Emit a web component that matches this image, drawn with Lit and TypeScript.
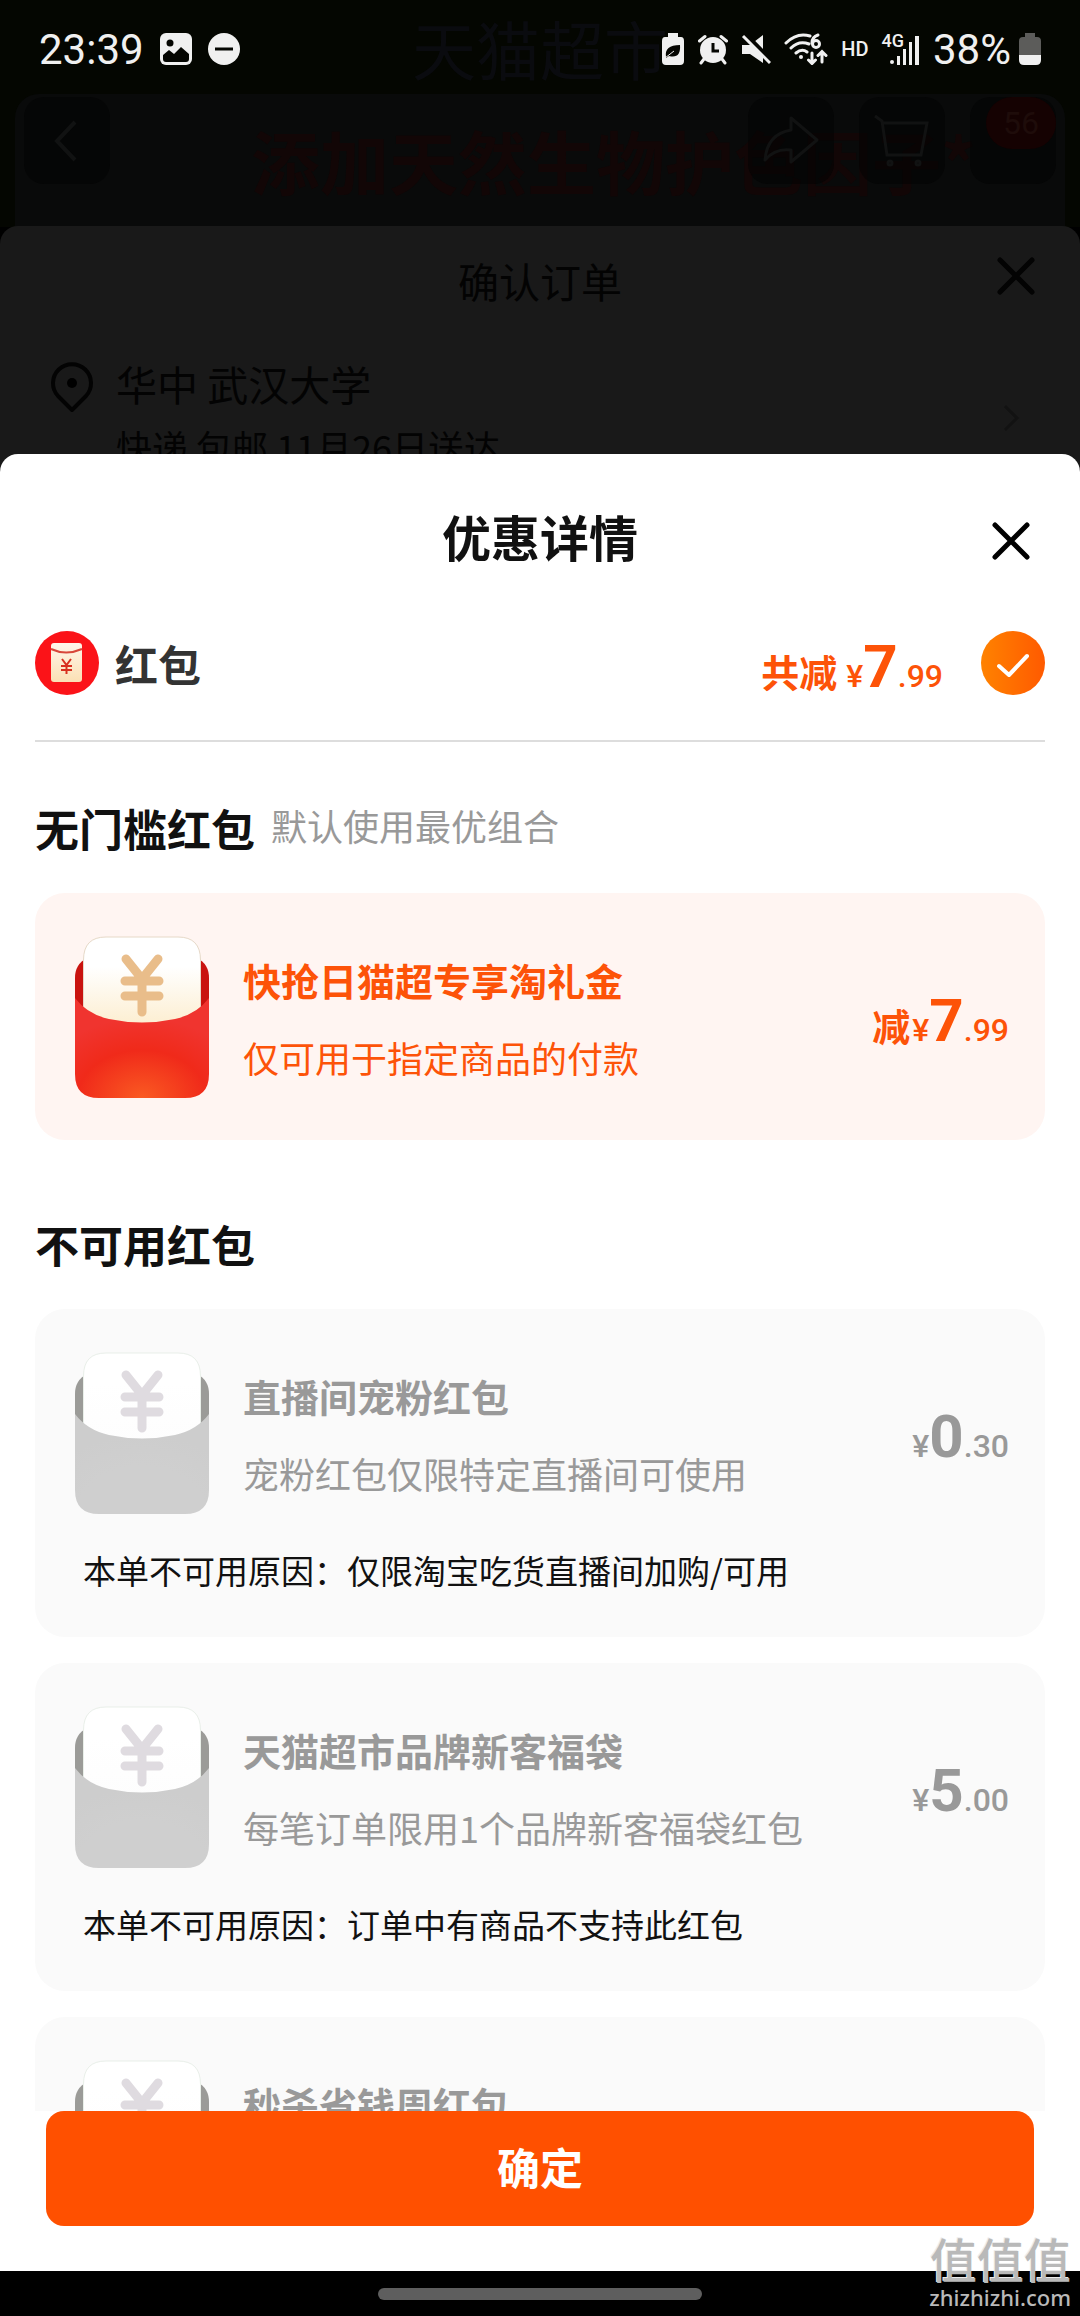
import { LitElement, html, css, svg, nothing } from "lit";
import { customElement, property } from "lit/decorators.js";

interface Coupon {
  title: string;
  desc: string;
  whole: string;
  cents: string;
  reason?: string;
}

const AVAILABLE: Coupon[] = [
  { title: "快抢日猫超专享淘礼金", desc: "仅可用于指定商品的付款", whole: "7", cents: "99" },
];

const UNAVAILABLE: Coupon[] = [
  {
    title: "直播间宠粉红包",
    desc: "宠粉红包仅限特定直播间可使用",
    whole: "0",
    cents: "30",
    reason: "本单不可用原因：仅限淘宝吃货直播间加购/可用",
  },
  {
    title: "天猫超市品牌新客福袋",
    desc: "每笔订单限用1个品牌新客福袋红包",
    whole: "5",
    cents: "00",
    reason: "本单不可用原因：订单中有商品不支持此红包",
  },
  {
    title: "秒杀省钱周红包",
    desc: "",
    whole: "",
    cents: "",
  },
];

@customElement("price-tag")
export class PriceTag extends LitElement {
  @property() prefix = "";
  @property() whole = "0";
  @property() cents = "00";

  static styles = css`
    :host {
      display: flex;
      align-items: baseline;
      padding-top: 8px;
      font-family: Roboto, "Noto Sans CJK SC", sans-serif;
      font-size: 32px;
      font-weight: 500;
      line-height: 32px;
      white-space: nowrap;
    }
    .prefix {
      font-family: "Noto Sans CJK SC", sans-serif;
      font-size: 38px;
      font-weight: 700;
      margin-right: var(--prefix-gap, 2px);
    }
    .whole {
      font-size: 60px;
      line-height: 52px;
      font-weight: 700;
    }
  `;

  render() {
    return html`${this.prefix ? html`<span class="prefix">${this.prefix}</span>` : nothing}<span>¥</span
      ><span class="whole">${this.whole}</span><span>.${this.cents}</span>`;
  }
}

@customElement("red-packet")
export class RedPacket extends LitElement {
  @property({ type: Boolean }) muted = false;

  static styles = css`
    :host {
      display: block;
      flex: none;
    }
    svg {
      display: block;
      width: 134px;
      height: 162px;
    }
  `;

  render() {
    const c = this.muted
      ? { back: "#9b9b98", edge: "#cdcdcd", mid: "#cfcfcf", low: "#cfcfcf", top: "#ffffff", foot: "#fdfdfd", line: "#e9efe9", yen: "#dfdbe0" }
      : { back: "#c9130f", edge: "#f0342f", mid: "#f02a1a", low: "#fa5a22", top: "#ffffff", foot: "#fcebc8", line: "#e6d9c8", yen: "#e9bd8a" };
    return html`<svg viewBox="0 0 134 162" aria-hidden="true">
      <defs>
        <linearGradient id="paper" x1="0" y1="0" x2="0" y2="1">
          <stop offset="0.3" stop-color=${c.top} />
          <stop offset="1" stop-color=${c.foot} />
        </linearGradient>
        <radialGradient id="body" cx="0.5" cy="1" r="0.8">
          <stop offset="0" stop-color=${c.low} />
          <stop offset="0.6" stop-color=${c.mid} />
          <stop offset="1" stop-color=${c.edge} />
        </radialGradient>
      </defs>
      <path d="M0 42Q0 28 12 22H122Q134 28 134 42V100H0Z" fill=${c.back} />
      <path d="M8.500 100V24Q8.500 1 31 1H103Q125.500 1 125.500 24V100Z" fill="url(#paper)" stroke=${c.line} />
      <path d="M0 62Q12 78 34 83Q67 90 100 83Q122 78 134 62V138Q134 162 110 162H24Q0 162 0 138Z" fill="url(#body)" />
      <path d="M51 23L67 43L83 23M50 45H84M50 60H84M67 43V76" fill="none" stroke=${c.yen} stroke-width="9" stroke-linecap="round" stroke-linejoin="round" />
    </svg>`;
  }
}

@customElement("coupon-card")
export class CouponCard extends LitElement {
  @property({ attribute: false }) coupon!: Coupon;
  @property({ type: Boolean, reflect: true }) disabled = false;

  static styles = css`
    :host {
      display: block;
      padding: 43px 36px 42px 40px;
      border-radius: 30px;
      background: #fff5f2;
      color: #fd5308;
    }
    :host([disabled]) {
      background: #fafafa;
      color: #999;
    }
    .main {
      display: flex;
      align-items: center;
      gap: 34px;
    }
    .info {
      flex: 1;
      display: flex;
      flex-direction: column;
      gap: 28px;
      min-width: 0;
      white-space: nowrap;
    }
    h3,
    p {
      margin: 0;
    }
    h3 {
      font-size: 38px;
      line-height: 52px;
      font-weight: 700;
    }
    .desc {
      min-height: 46px;
      font-size: 36px;
      line-height: 46px;
    }
    .reason {
      margin: 31px 0 0 8px;
      font-size: 33px;
      line-height: 50px;
      color: #111;
    }
  `;

  render() {
    const c = this.coupon;
    return html`
      <div class="main">
        <red-packet ?muted=${this.disabled}></red-packet>
        <div class="info">
          <h3>${c.title}</h3>
          <p class="desc">${c.desc}</p>
        </div>
        ${c.whole
          ? html`<price-tag prefix=${this.disabled ? "" : "减"} whole=${c.whole} cents=${c.cents}></price-tag>`
          : nothing}
      </div>
      ${c.reason ? html`<p class="reason">${c.reason}</p>` : nothing}
    `;
  }
}

@customElement("status-bar")
export class StatusBar extends LitElement {
  static styles = css`
    :host {
      display: flex;
      align-items: center;
      justify-content: space-between;
      height: 98px;
      padding: 0 39px;
      font-family: Roboto, sans-serif;
      font-size: 42px;
      color: #f0f0f0;
    }
    .side {
      display: flex;
      align-items: center;
    }
    .left {
      gap: 16px;
    }
    .right {
      gap: 13px;
    }
    .power {
      display: flex;
      align-items: center;
      gap: 8px;
    }
    .hd {
      font-size: 20px;
      font-weight: 500;
    }
    .cell {
      display: flex;
    }
    .gen {
      font-size: 18px;
      line-height: 18px;
      font-weight: 500;
    }
    svg {
      display: block;
      height: 32px;
      fill: currentColor;
    }
    .bars {
      margin: 2px 0 0 -14px;
    }
  `;

  render() {
    const dark = "#050602";
    return html`
      <div class="side left">
        <span>23:39</span>
        <svg width="32" viewBox="0 0 32 32">
          <rect width="32" height="32" rx="6" />
          <circle cx="10" cy="10" r="3.500" fill=${dark} />
          <path d="M3 22L9 17L14 21L21 14L29 21V26Q29 29 26 29H6Q3 29 3 26Z" fill=${dark} />
        </svg>
        <svg width="32" viewBox="0 0 32 32">
          <circle cx="16" cy="16" r="16" />
          <path d="M7 16H25" stroke=${dark} stroke-width="3" />
        </svg>
      </div>
      <div class="side right">
        <svg width="24" viewBox="0 0 24 32">
          <path d="M7 0H17V4H20Q23 4 23 8V28Q23 32 19 32H5Q1 32 1 28V8Q1 4 4 4H7Z" />
          <path d="M5 24Q3 12 19 12Q20 26 8 23L5 25ZM8 21L14 17" fill=${dark} />
          <path d="M4 25L13 18" stroke="currentColor" stroke-width="1" />
        </svg>
        <svg width="30" viewBox="0 0 30 32">
          <circle cx="15" cy="17" r="13" />
          <path d="M1.500 8L7 3.500M28.500 8L23 3.500M6 26L3 30M24 26L27 30" stroke="currentColor" stroke-width="3" stroke-linecap="round" />
          <path d="M15 10V18H21" fill="none" stroke=${dark} stroke-width="3" />
        </svg>
        <svg width="30" viewBox="0 0 30 32">
          <path d="M1 12H9L22 2V30L9 21H1Z" />
          <path d="M3 0L31 29" stroke=${dark} stroke-width="5" />
          <path d="M2 3L29 30" stroke="currentColor" stroke-width="3" />
        </svg>
        <svg width="44" viewBox="0 0 44 32">
          <g fill="none" stroke="currentColor" stroke-width="3" stroke-linecap="round">
            <path d="M2 10Q13 -1 26 3M7 15Q15 7 25 11M12 20Q18 15 23 19" />
            <path d="M34 2Q28 4 28 10" />
            <circle cx="32" cy="11" r="3.500" />
            <path d="M28 20V30M24.500 27L28 30.500L31.500 27M38 29V19M34 22.500L38 18.500L42 22.500" />
          </g>
          <circle cx="17" cy="24" r="2" />
        </svg>
        <span class="hd">HD</span>
        <span class="cell">
          <span class="gen">4G</span>
          <svg class="bars" width="30" viewBox="0 0 30 32">
            <path d="M0 28a2 2 0 0 1 4 0a2 2 0 0 1-4 0M7 22h3v9h-3zM13 15h3v16h-3zM19 8h3v23h-3zM25 2h4v29h-4z" />
          </svg>
        </span>
        <span class="power">
          <span>38%</span>
          <svg width="22" viewBox="0 0 22 32">
            <path d="M6 0H16V4H18Q22 4 22 8V22H0V8Q0 4 4 4H6Z" fill="#5c5c5a" />
            <path d="M0 22H22V27Q22 32 17 32H5Q0 32 0 27Z" />
          </svg>
        </span>
      </div>
    `;
  }
}

const cross = (width: number) => svg`
  <path d="M4 4L36 36M36 4L4 36" fill="none" stroke="currentColor" stroke-width=${width} stroke-linecap="round" />
`;

@customElement("app-root")
export class AppRoot extends LitElement {
  static styles = css`
    :host {
      position: relative;
      display: flex;
      flex-direction: column;
      height: 100vh;
      overflow: hidden;
      background: #000;
      font-family: "Noto Sans CJK SC", sans-serif;
    }
    * {
      box-sizing: border-box;
    }
    h1,
    h2,
    p {
      margin: 0;
    }
    button {
      padding: 0;
      border: 0;
      background: none;
      color: inherit;
      font: inherit;
    }
    svg {
      display: block;
    }
    status-bar {
      position: absolute;
      inset: 0 0 auto;
    }

    /* Dimmed page behind the sheet */
    .shop {
      padding: 0 15px;
      background: #040601;
      white-space: nowrap;
    }
    .brand {
      font-size: 64px;
      line-height: 94px;
      color: #0a0b0f;
      text-align: center;
    }
    .banner {
      padding-left: 236px;
      background: #090a0a;
      border-radius: 24px 24px 0 0;
      font-size: 69px;
      line-height: 133px;
      font-weight: 700;
      color: #120606;
    }
    .tools {
      position: absolute;
      inset: 97px 24px auto;
      display: flex;
      gap: 25px;
      color: #111212;
    }
    .tool {
      display: grid;
      place-items: center;
      width: 86px;
      height: 87px;
      border-radius: 20px;
      background: rgba(3, 3, 3, 0.6);
    }
    .tool:first-child {
      margin-right: auto;
    }
    .more {
      justify-items: end;
      align-items: start;
    }
    .count {
      width: 70px;
      border-radius: 26px;
      background: #150202;
      color: #1e0c0a;
      font: 32px/52px Roboto, sans-serif;
      text-align: center;
    }
    .order {
      margin-top: -1px;
      height: 248px;
      border-radius: 18px 18px 0 0;
      background: #191919;
      color: #030303;
      font-size: 41px;
    }
    .bar {
      display: grid;
      grid-template-columns: 1fr auto 1fr;
    }
    .bar > h1,
    .bar > .name {
      grid-column: 2;
    }
    .bar > button {
      justify-self: end;
    }
    .order .bar {
      padding: 24px 44px 0;
      line-height: 60px;
    }
    .order .bar button {
      display: grid;
      place-items: center;
      height: 52px;
    }
    .address {
      display: flex;
      align-items: flex-start;
      gap: 22px;
      padding: 43px 60px 0 50px;
      line-height: 60px;
    }
    .address svg {
      margin-top: 8px;
    }
    .place {
      flex: 1;
    }
    .ship {
      font-size: 36px;
      line-height: 66px;
    }
    .address .arrow {
      margin-top: 51px;
      color: #121212;
    }

    /* Discount sheet */
    .sheet {
      position: relative;
      flex: 1;
      min-height: 0;
      margin-top: -20px;
      display: flex;
      flex-direction: column;
      border-radius: 18px 18px 0 0;
      background: #fff;
      color: #111;
    }
    .sheet > .bar {
      align-items: end;
      padding: 52px 49px 0;
    }
    h1 {
      font-size: 49px;
      line-height: 60px;
      font-weight: 700;
    }
    .close {
      display: grid;
      place-items: center;
      height: 50px;
      color: #000;
    }
    .summary {
      display: flex;
      align-items: center;
      gap: 16px;
      margin: 65px 35px 0;
      padding-bottom: 45px;
      border-bottom: 2px solid #ddd;
      color: #333;
      font-size: 43px;
      line-height: 60px;
      font-weight: 700;
    }
    .summary price-tag {
      --prefix-gap: 9px;
      margin-left: auto;
      color: #fd5308;
    }
    .check {
      position: relative;
      margin-left: 22px;
    }
    .check input {
      position: absolute;
      inset: 0;
      width: 100%;
      height: 100%;
      margin: 0;
      opacity: 0;
    }
    .list {
      flex: 1;
      min-height: 0;
      overflow: hidden auto;
      scrollbar-width: none;
      padding: 56px 35px 0;
    }
    .heading {
      display: flex;
      gap: 16px;
      margin-bottom: 35px;
    }
    h2 {
      font-size: 44px;
      line-height: 60px;
      font-weight: 700;
    }
    .hint {
      color: #999;
      font-size: 36px;
      line-height: 54px;
    }
    .cards {
      display: flex;
      flex-direction: column;
      gap: 26px;
    }
    .cards + .heading {
      margin-top: 74px;
    }
    .footer {
      padding: 0 46px 45px;
    }
    .confirm {
      display: block;
      width: 100%;
      height: 115px;
      padding-bottom: 6px;
      border-radius: 18px;
      background: #ff5000;
      color: #fff;
      font-size: 43px;
      font-weight: 700;
    }
    .gesture {
      display: flex;
      justify-content: center;
      padding: 17px 0 16px;
    }
    .pill {
      width: 30%;
      height: 12px;
      border-radius: 6px;
      background: #5e5e5e;
    }
    .mark {
      position: absolute;
      right: 9px;
      bottom: 6px;
      color: #b9b9b9;
      text-align: right;
      font-size: 47px;
      line-height: 52px;
      font-weight: 500;
      text-shadow: -1px -1px 0 #ececec;
    }
    .site {
      font-family: "Noto Sans", sans-serif;
      font-size: 22px;
      line-height: 26px;
      text-shadow: none;
    }
  `;

  render() {
    return html`
      <div class="shop">
        <div class="brand">天猫超市</div>
        <div class="banner">添加天然生物护色因子*</div>
      </div>
      <div class="tools">
        <button class="tool" aria-label="返回">
          <svg width="30" height="44" viewBox="0 0 30 44" fill="none" stroke="currentColor" stroke-width="4"><path d="M23 3L5 22L23 41" /></svg>
        </button>
        <button class="tool" aria-label="分享">
          <svg width="60" height="54" viewBox="0 0 60 54" fill="none" stroke="currentColor" stroke-width="3" stroke-linejoin="round">
            <path d="M30 4L56 26L30 48V36Q14 34 4 46Q6 20 30 16Z" />
          </svg>
        </button>
        <button class="tool" aria-label="购物车">
          <svg width="58" height="56" viewBox="0 0 58 56" fill="none" stroke="currentColor" stroke-width="3">
            <path d="M2 3L9 8L14 42H48L54 10H10" />
            <circle cx="17" cy="50" r="2" /><circle cx="45" cy="50" r="2" />
          </svg>
        </button>
        <button class="tool more" aria-label="更多"><span class="count">56</span></button>
      </div>
      <div class="order">
        <div class="bar">
          <span class="name">确认订单</span>
          <button aria-label="关闭订单">
            <svg width="40" height="40" viewBox="0 0 40 40">${cross(5)}</svg>
          </button>
        </div>
        <div class="address">
          <svg width="44" height="52" viewBox="0 0 44 52">
            <path d="M22 49L8 35A19 19 0 1 1 36 35Z" fill="none" stroke="currentColor" stroke-width="4" stroke-linejoin="round" />
            <circle cx="22" cy="22" r="5" />
          </svg>
          <div class="place">
            <p>华中 武汉大学</p>
            <p class="ship">快递 包邮 11月26日送达</p>
          </div>
          <svg class="arrow" width="18" height="28" viewBox="0 0 18 28" fill="none" stroke="currentColor" stroke-width="3"><path d="M3 2L15 14L3 26" /></svg>
        </div>
      </div>
      <main class="sheet">
        <div class="bar">
          <h1>优惠详情</h1>
          <button class="close" aria-label="关闭">
            <svg width="40" height="40" viewBox="0 0 40 40">${cross(5)}</svg>
          </button>
        </div>
        <div class="summary">
          <svg width="64" height="64" viewBox="0 0 64 64">
            <defs>
              <linearGradient id="bag" x1="0" y1="0" x2="0" y2="1">
                <stop offset="0" stop-color="#fff6ea" /><stop offset="1" stop-color="#fbe0b4" />
              </linearGradient>
            </defs>
            <circle cx="32" cy="32" r="32" fill="#fb1318" />
            <rect x="16" y="12" width="31" height="39" rx="3" fill="url(#bag)" />
            <path d="M16 18Q31 25 47 18" fill="none" stroke="#d8473a" stroke-width="2" />
            <path d="M27 28L31.500 34L36 28M26 35H37M26 39H37M31.500 34V43" fill="none" stroke="#d8301f" stroke-width="2" />
          </svg>
          <span>红包</span>
          <price-tag prefix="共减" whole="7" cents="99"></price-tag>
          <label class="check">
            <input type="checkbox" checked aria-label="使用红包" />
            <svg width="64" height="64" viewBox="0 0 64 64">
              <defs>
                <linearGradient id="tick"><stop offset="0" stop-color="#ff8200" /><stop offset="1" stop-color="#ff5a00" /></linearGradient>
              </defs>
              <circle cx="32" cy="32" r="32" fill="url(#tick)" />
              <path d="M18 35L28 44L46 25" fill="none" stroke="#fff" stroke-width="4" stroke-linecap="round" stroke-linejoin="round" />
            </svg>
          </label>
        </div>
        <div class="list">
          <div class="heading">
            <h2>无门槛红包</h2>
            <span class="hint">默认使用最优组合</span>
          </div>
          <div class="cards">${AVAILABLE.map((c) => html`<coupon-card .coupon=${c}></coupon-card>`)}</div>
          <div class="heading"><h2>不可用红包</h2></div>
          <div class="cards">${UNAVAILABLE.map((c) => html`<coupon-card disabled .coupon=${c}></coupon-card>`)}</div>
        </div>
        <div class="footer"><button class="confirm">确定</button></div>
      </main>
      <div class="gesture"><div class="pill"></div></div>
      <status-bar></status-bar>
      <div class="mark">
        <div>值值值</div>
        <div class="site">zhizhizhi.com</div>
      </div>
    `;
  }
}
